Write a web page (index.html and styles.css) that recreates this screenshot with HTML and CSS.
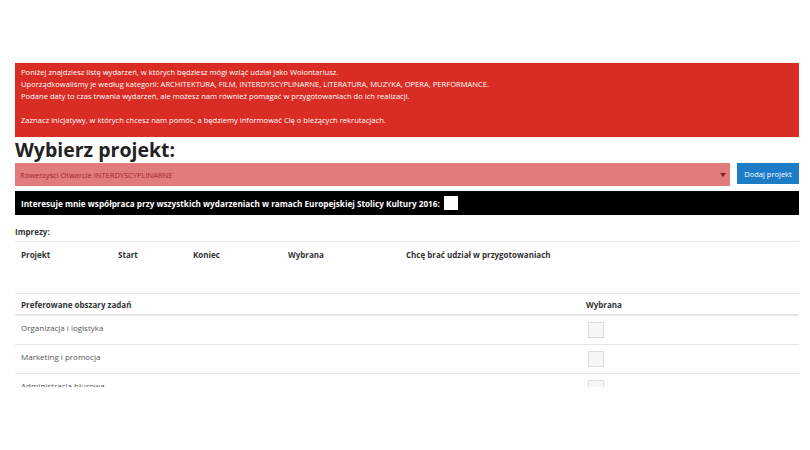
FILE: index.html
```html
<!DOCTYPE html>
<html lang="pl">
<head>
    <meta charset="UTF-8">
    <meta name="viewport" content="width=device-width, initial-scale=1.0">
    <title>Wolontariat - wybierz projekt</title>
    <link rel="stylesheet" href="styles.css">
</head>
<body>
    <div class="container">
        <div class="notice">
            <p>Poniżej znajdziesz listę wydarzeń, w których będziesz mógł wziąć udział jako Wolontariusz.<br>
            Uporządkowaliśmy je według kategorii: ARCHITEKTURA, FILM, INTERDYSCYPLINARNE, LITERATURA, MUZYKA, OPERA, PERFORMANCE.<br>
            Podane daty to czas trwania wydarzeń, ale możesz nam również pomagać w przygotowaniach do ich realizacji.</p>
            <p>Zaznacz inicjatywy, w których chcesz nam pomóc, a będziemy informować Cię o bieżących rekrutacjach.</p>
        </div>

        <h2>Wybierz projekt:</h2>
        <div class="project-row">
            <div class="select">
                <span>Rowerzyści Otwarcie INTERDYSCYPLINARNE</span>
                <span class="caret"></span>
            </div>
            <button type="button" class="btn">Dodaj projekt</button>
        </div>

        <div class="all-events">
            <span>Interesuje mnie współpraca przy wszystkich wydarzeniach w ramach Europejskiej Stolicy Kultury 2016:</span>
            <span class="white-box"></span>
        </div>

        <div class="label">Imprezy:</div>
        <table class="events">
            <colgroup>
                <col style="width:97px">
                <col style="width:75px">
                <col style="width:95px">
                <col style="width:118px">
                <col>
            </colgroup>
            <thead>
                <tr>
                    <th>Projekt</th>
                    <th>Start</th>
                    <th>Koniec</th>
                    <th>Wybrana</th>
                    <th>Chcę brać udział w przygotowaniach</th>
                </tr>
            </thead>
        </table>

        <table class="areas">
            <colgroup>
                <col style="width:565px">
                <col>
            </colgroup>
            <thead>
                <tr>
                    <th>Preferowane obszary zadań</th>
                    <th>Wybrana</th>
                </tr>
            </thead>
            <tbody>
                <tr>
                    <td>Organizacja i logistyka</td>
                    <td><span class="check"></span></td>
                </tr>
                <tr>
                    <td>Marketing i promocja</td>
                    <td><span class="check"></span></td>
                </tr>
                <tr>
                    <td>Administracja biurowa</td>
                    <td><span class="check"></span></td>
                </tr>
            </tbody>
        </table>
    </div>
</body>
</html>
```

FILE: styles.css
```css
body {
    font-family: "Open Sans", Arial, sans-serif;
    background-color: #fff;
    color: #333;
    margin: 0;
}
.container {
    width: 784px;
    margin-left: 15px;
    padding-top: 63px;
    height: 324px;
    overflow: hidden;
}
.notice {
    background-color: #d92c25;
    color: #fff;
    font-size: 7.6px;
    line-height: 12px;
    padding: 3px 6px 11px;
}
.notice p {
    margin: 0 0 12px;
}
.notice p:last-child {
    margin-bottom: 0;
}
h2 {
    font-size: 19.5px;
    line-height: 26px;
    font-weight: 700;
    color: #222;
    margin: 0;
}
.project-row {
    display: flex;
    align-items: flex-start;
    gap: 7px;
}
.select {
    flex: 1;
    height: 23px;
    background-color: #e07c7b;
    color: #a02828;
    font-size: 7.5px;
    display: flex;
    align-items: center;
    justify-content: space-between;
    padding: 0 4px 0 5px;
    box-sizing: border-box;
}
.caret {
    border-left: 3px solid transparent;
    border-right: 3px solid transparent;
    border-top: 4px solid #8a1d1d;
}
.btn {
    width: 62px;
    height: 21px;
    background-color: #1c7cc8;
    color: #fff;
    border: none;
    font-family: inherit;
    font-size: 7.5px;
    padding: 0;
}
.all-events {
    margin-top: 5px;
    height: 24px;
    background-color: #000;
    color: #fff;
    font-size: 8.2px;
    font-weight: 700;
    display: flex;
    align-items: center;
    gap: 4px;
    padding: 0 6px;
}
.white-box {
    width: 14px;
    height: 14px;
    background-color: #fff;
}
.label {
    font-size: 8px;
    font-weight: 700;
    line-height: 12px;
    margin: 11px 0 3px;
}
table {
    width: 100%;
    border-collapse: collapse;
    table-layout: fixed;
    font-size: 8px;
}
th {
    text-align: left;
    font-weight: 700;
    padding: 0 6px;
}
.events {
    border-top: 1px solid #e6e6e6;
    height: 52px;
}
.events th {
    vertical-align: top;
    padding-top: 7px;
}
.areas thead tr {
    border-top: 1px solid #e6e6e6;
    border-bottom: 2px solid #e6e6e6;
}
.areas th {
    height: 20px;
}
.areas td {
    color: #555;
    vertical-align: top;
    padding: 6px 6px 0;
    height: 22px;
    border-bottom: 1px solid #e6e6e6;
}
.check {
    display: block;
    width: 14px;
    height: 14px;
    margin-left: 2px;
    border: 1px solid #ddd;
    background-color: #f7f7f7;
}
```
